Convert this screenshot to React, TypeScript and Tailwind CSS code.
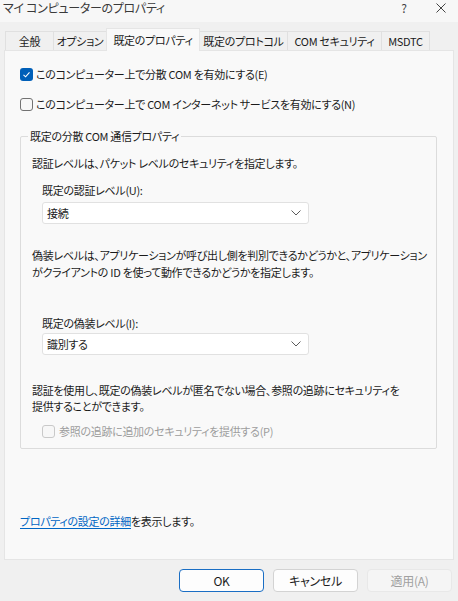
const font = {
  fontFamily: '"Noto Sans CJK JP", "Noto Sans", sans-serif',
};

function CheckBox({ checked, disabled }: { checked?: boolean; disabled?: boolean }) {
  if (checked) {
    return (
      <span className="w-[13px] h-[13px] rounded-[3px] bg-[#005fb8] flex items-center justify-center shrink-0">
        <svg width="9" height="9" viewBox="0 0 9 9">
          <polyline points="1.5,4.8 3.6,6.8 7.5,2.4" fill="none" stroke="#fff" strokeWidth="1.1" />
        </svg>
      </span>
    );
  }
  return (
    <span
      className={
        disabled
          ? "w-[13px] h-[13px] rounded-[3px] border border-[#c9c9c9] bg-[#f7f7f7] shrink-0"
          : "w-[13px] h-[13px] rounded-[3px] border border-[#727272] bg-[#f7f7f7] shrink-0"
      }
    />
  );
}

function Select({ value }: { value: string }) {
  return (
    <div className="w-[267px] h-[22px] bg-white border border-[#e1e1e1] rounded-[3px] flex items-center justify-between pl-[4px] pr-[7px] text-[#1b1b1b]">
      <span>{value}</span>
      <svg width="10" height="6" viewBox="0 0 10 6">
        <polyline points="0.5,0.5 5,5 9.5,0.5" fill="none" stroke="#5c5c5c" strokeWidth="1" />
      </svg>
    </div>
  );
}

function Tab({ label, w, active }: { label: string; w: string; active?: boolean }) {
  if (active) {
    return (
      <div className={`${w} relative z-10 -mb-px h-[23px] bg-[#f9f9f9] border border-b-0 border-[#e5e5e5] flex items-center justify-center whitespace-nowrap`}>
        {label}
      </div>
    );
  }
  return (
    <div className={`${w} h-[19px] bg-[#f0f0f0] border border-b-0 border-[#e0e0e0] flex items-center justify-center whitespace-nowrap`}>
      {label}
    </div>
  );
}

export default function App() {
  return (
    <div
      className="w-[458px] h-[601px] bg-[#f0f0f0] flex flex-col overflow-hidden [font-feature-settings:'palt'] text-[11px] tracking-[-0.3px] text-[#1b1b1b] whitespace-nowrap"
      style={font}
    >
      {/* title bar */}
      <div className="h-[22px] bg-[#f7f7f7] flex items-start justify-between">
        <span className="text-[12px] leading-[16px] ml-[3px] text-[#3a3a3a]">
          マイ コンピューターのプロパティ
        </span>
        <div className="flex items-start">
          <span className="w-[20px] text-center text-[12px] leading-[16px] text-[#444]">?</span>
          <span className="ml-[22px] mr-[12px] mt-[3px]">
            <svg width="10" height="10" viewBox="0 0 10 10">
              <path d="M0.5 0.5 L9.5 9.5 M9.5 0.5 L0.5 9.5" stroke="#444" strokeWidth="1" />
            </svg>
          </span>
        </div>
      </div>

      {/* tabs */}
      <div className="mt-[6px] pl-[5px] flex items-end h-[22px]">
        <Tab label="全般" w="w-[49px]" />
        <Tab label="オプション" w="w-[54px] -ml-px" />
        <Tab label="既定のプロパティ" w="w-[94px] -ml-px" active />
        <Tab label="既定のプロトコル" w="w-[89px] -ml-px" />
        <Tab label="COM セキュリティ" w="w-[95px] -ml-px" />
        <Tab label="MSDTC" w="w-[49px] -ml-px" />
      </div>

      {/* panel */}
      <div className="mx-[4px] h-[510px] bg-[#f9f9f9] border border-[#e5e5e5] flex flex-col pl-[15px]">
        <label className="mt-[13px] h-[20px] flex items-center gap-[3px]">
          <CheckBox checked />
          <span>このコンピューター上で分散 COM を有効にする(E)</span>
        </label>
        <label className="mt-[10px] h-[20px] flex items-center gap-[3px]">
          <CheckBox />
          <span>このコンピューター上で COM インターネット サービスを有効にする(N)</span>
        </label>

        <fieldset className="mt-[14px] w-[417px] h-[321px] border border-[#dcdcdc] rounded-[2px]">
          <legend className="ml-[7px] px-[2px] leading-[16px]">既定の分散 COM 通信プロパティ</legend>
          <div className="pl-[11px] flex flex-col">
            <p className="mt-[11px] leading-[16px]">認証レベルは、パケット レベルのセキュリティを指定します。</p>
            <div className="pl-[10px] flex flex-col">
              <span className="mt-[11px] leading-[16px]">既定の認証レベル(U):</span>
              <div className="mt-[4px]">
                <Select value="接続" />
              </div>
            </div>
            <p className="mt-[23px] leading-[17px]">
              偽装レベルは、アプリケーションが呼び出し側を判別できるかどうかと、アプリケーション
              <br />
              がクライアントの ID を使って動作できるかどうかを指定します。
            </p>
            <div className="pl-[10px] flex flex-col">
              <span className="mt-[34px] leading-[16px]">既定の偽装レベル(I):</span>
              <div className="mt-[2px]">
                <Select value="識別する" />
              </div>
            </div>
            <p className="mt-[27px] leading-[16px]">
              認証を使用し、既定の偽装レベルが匿名でない場合、参照の追跡にセキュリティを
              <br />
              提供することができます。
            </p>
            <label className="mt-[8px] ml-[10px] h-[18px] flex items-center gap-[4px] text-[#9d9d9d]">
              <CheckBox disabled />
              <span>参照の追跡に追加のセキュリティを提供する(P)</span>
            </label>
          </div>
        </fieldset>

        <p className="mt-[64px] leading-[16px]">
          <a className="text-[#0066c4] underline underline-offset-2">プロパティの設定の詳細</a>
          を表示します。
        </p>
      </div>

      {/* buttons */}
      <div className="mt-[9px] flex justify-end gap-[9px] pr-[6px] text-[12px]">
        <button className="w-[85px] h-[23px] bg-[#fdfdfd] border border-[#1a6ec4] rounded-[4px]">OK</button>
        <button className="w-[85px] h-[23px] bg-[#fdfdfd] border border-[#d3d3d3] rounded-[4px]">キャンセル</button>
        <button className="w-[85px] h-[23px] bg-[#f5f5f5] border border-[#e8e8e8] rounded-[4px] text-[#a0a0a0]">
          適用(A)
        </button>
      </div>
    </div>
  );
}
